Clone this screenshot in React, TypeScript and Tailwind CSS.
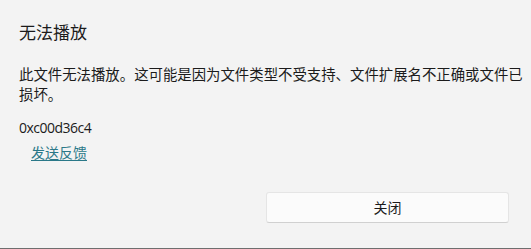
import React from 'react';

const cjk = '"Segoe UI", "Noto Sans CJK SC", sans-serif';

const App: React.FC = () => {
    return (
        <div
            className="w-[531px] h-[249px] bg-[#f3f3f3] border-b border-[#6e6e6e] flex flex-col text-[#1b1b1b]"
            style={{ fontFamily: cjk }}
        >
            <div className="pl-[19px] flex flex-col">
                <h1 className="mt-[20px] h-6 leading-6 text-[17px] font-normal">无法播放</h1>
                <p className="mt-[20px] w-[500px] text-[14.4px] leading-5 break-all whitespace-nowrap">
                    此文件无法播放。这可能是因为文件类型不受支持、文件扩展名不正确或文件已
                    <br />
                    损坏。
                </p>
                <p
                    className="mt-[14px] text-[14px] leading-5 tracking-[-0.5px]"
                    style={{ fontFamily: '"Open Sans", "Noto Sans CJK SC", sans-serif' }}
                >
                    0xc00d36c4
                </p>
                <a href="#" className="mt-[4px] ml-[12px] self-start text-[14px] leading-5 text-[#2a7888] underline underline-offset-2">
                    发送反馈
                </a>
            </div>
            <div className="mt-[30px] flex justify-end pr-[22px]">
                <button className="w-[243px] h-[31px] bg-[#fbfbfb] border border-[#e5e5e5] border-b-[#d0d0d0] rounded-[3px] text-[14px] text-[#1b1b1b]">
                    关闭
                </button>
            </div>
        </div>
    );
};

export default App;
